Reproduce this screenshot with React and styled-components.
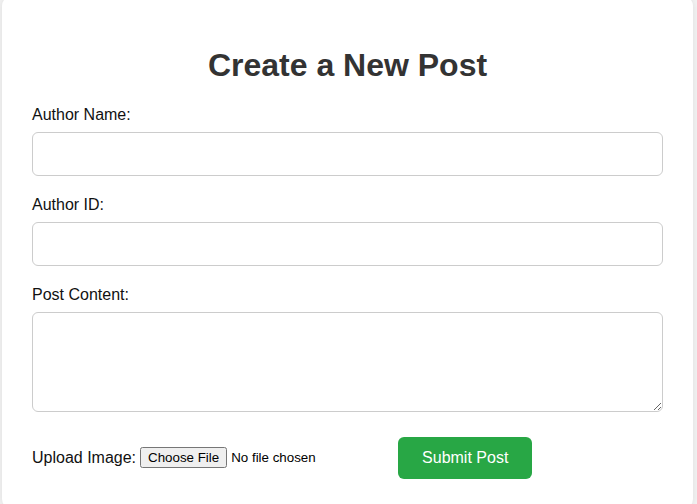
import React from "react";
import styled, { createGlobalStyle } from "styled-components";

const GlobalStyle = createGlobalStyle`
  body {
    margin: 0;
    background: #f4f4f4;
    font-family: "Liberation Sans", Arial, sans-serif;
    overflow: hidden;
  }
`;

const Card = styled.form`
  margin: -4px 4px 0 2px;
  padding: 30px;
  background: #fff;
  border-radius: 10px;
  box-shadow: 0 0 10px rgba(0, 0, 0, 0.1);
`;

const Title = styled.h1`
  margin: 0.67em 0;
  font-size: 32px;
  text-align: center;
  color: #333;
`;

const Label = styled.label`
  display: block;
  margin-bottom: 8px;
  font-size: 16px;
  color: #111;
`;

const TextInput = styled.input`
  display: block;
  width: 100%;
  box-sizing: border-box;
  padding: 12px;
  margin-bottom: 20px;
  font-size: 16px;
  font-family: inherit;
  border: 1px solid #ccc;
  border-radius: 6px;
`;

const TextArea = styled.textarea`
  display: block;
  width: 100%;
  height: 100px;
  box-sizing: border-box;
  padding: 12px;
  margin: 0 0 25px;
  font-size: 16px;
  font-family: inherit;
  border: 1px solid #ccc;
  border-radius: 6px;
`;

const Actions = styled.div`
  display: flex;
  align-items: center;
`;

const InlineLabel = styled.label`
  font-size: 16px;
  color: #111;
  margin-right: 4px;
`;

const FileInput = styled.input`
  font: 13.333px "Liberation Sans", Arial, sans-serif;
`;

const SubmitButton = styled.button`
  margin-left: 5px;
  padding: 12px 24px;
  font-size: 16px;
  font-family: inherit;
  color: #fff;
  background: #28a745;
  border: none;
  border-radius: 6px;
  cursor: pointer;
`;

export default function App() {
  return (
    <>
      <GlobalStyle />
      <Card onSubmit={(e) => e.preventDefault()}>
        <Title>Create a New Post</Title>
        <Label htmlFor="authorName">Author Name:</Label>
        <TextInput id="authorName" type="text" />
        <Label htmlFor="authorId">Author ID:</Label>
        <TextInput id="authorId" type="text" />
        <Label htmlFor="content">Post Content:</Label>
        <TextArea id="content" />
        <Actions>
          <InlineLabel htmlFor="image">Upload Image:</InlineLabel>
          <FileInput id="image" type="file" />
          <SubmitButton type="submit">Submit Post</SubmitButton>
        </Actions>
      </Card>
    </>
  );
}
